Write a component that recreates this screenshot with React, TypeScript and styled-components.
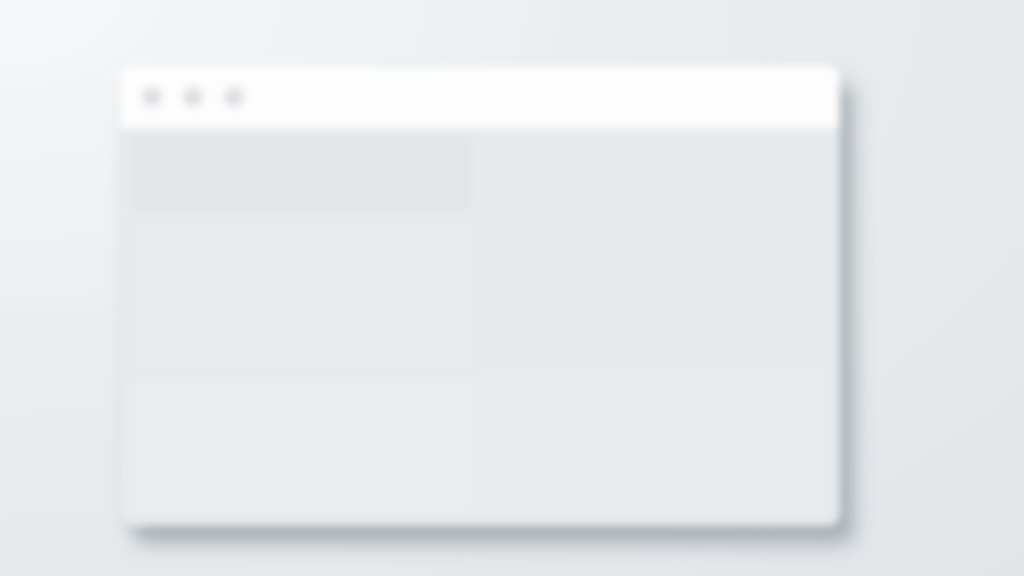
import React from 'react';
import styled, { createGlobalStyle } from 'styled-components';

const Global = createGlobalStyle`
  html, body { margin: 0; padding: 0; }
  body {
    width: 1024px;
    height: 576px;
    overflow: hidden;
    font-family: "Liberation Sans", Arial, sans-serif;
  }
`;

const Backdrop = styled.div`
  width: 1024px;
  height: 576px;
  box-sizing: border-box;
  padding: 66px 0 0 120px;
  background: radial-gradient(ellipse at 0% 0%, #f6f7f8 0%, #eaedef 45%, #e1e5e8 100%);
`;

const Window = styled.div`
  width: 720px;
  height: 460px;
  display: flex;
  flex-direction: column;
  border-radius: 12px;
  overflow: hidden;
  background: #e6eaed;
  box-shadow: 14px 18px 18px rgba(130, 142, 150, 0.6), 2px 4px 10px rgba(150, 160, 168, 0.3);
  filter: blur(4px);
`;

const TitleBar = styled.div`
  height: 62px;
  flex: none;
  display: flex;
  align-items: center;
  gap: 21px;
  padding-left: 22px;
  background: #fdfdfd;
`;

const Dot = styled.span`
  width: 20px;
  height: 20px;
  border-radius: 50%;
  background: #dcdfe2;
`;

const Body = styled.div`
  flex: 1;
  display: grid;
  grid-template-columns: 340px 1fr;
  padding: 8px 12px 12px;
  gap: 4px;
`;

const Column = styled.div`
  display: flex;
  flex-direction: column;
  gap: 10px;
`;

const Block = styled.div<{ $h?: number; $tone: string }>`
  height: ${(p) => (p.$h ? `${p.$h}px` : 'auto')};
  flex: ${(p) => (p.$h ? 'none' : '1')};
  border-radius: 6px;
  background: ${(p) => p.$tone};
`;

export default function App() {
  return (
    <>
      <Global />
      <Backdrop>
        <Window>
          <TitleBar>
            <Dot />
            <Dot />
            <Dot />
          </TitleBar>
          <Body>
            <Column>
              <Block $h={74} $tone="#e2e6e9" />
              <Block $h={150} $tone="#e7ebee" />
              <Block $tone="#e9edf0" />
            </Column>
            <Column>
              <Block $h={224} $tone="#e6eaed" />
              <Block $tone="#e8ecef" />
            </Column>
          </Body>
        </Window>
      </Backdrop>
    </>
  );
}
